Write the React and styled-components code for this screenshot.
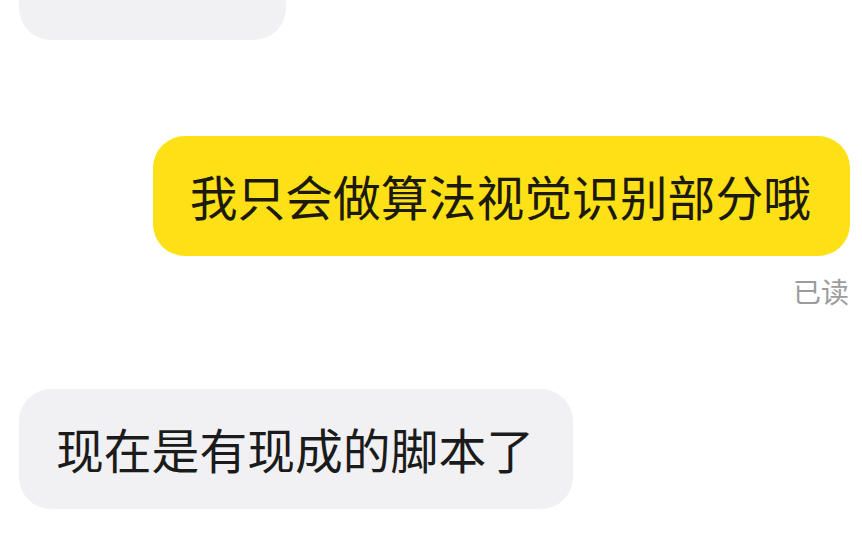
import React from 'react'
import styled, { createGlobalStyle } from 'styled-components'

const GlobalStyle = createGlobalStyle`
  html, body {
    margin: 0;
    padding: 0;
    background: #ffffff;
    overflow: hidden;
  }
`

const Chat = styled.div`
  width: 862px;
  height: 534px;
  box-sizing: border-box;
  padding: 0 12px 0 19px;
  display: flex;
  flex-direction: column;
  overflow: hidden;
  font-family: "Noto Sans CJK SC", "Noto Sans", sans-serif;
`

const Row = styled.div`
  display: flex;
  flex-direction: column;
  align-items: ${p => (p.$mine ? 'flex-end' : 'flex-start')};
  margin-top: ${p => p.$gap}px;
`

const Bubble = styled.div`
  box-sizing: border-box;
  height: 120px;
  display: flex;
  align-items: center;
  padding: 0 39px ${p => p.$lift || 0}px 37px;
  border-radius: 32px;
  font-size: 47.8px;
  line-height: 1;
  white-space: nowrap;
  color: ${p => (p.$mine ? '#1c1a0c' : '#1b1b1b')};
  background: ${p => (p.$mine ? '#fde016' : '#f1f1f3')};
`

const ReadMark = styled.div`
  margin-top: 16px;
  margin-right: 1px;
  font-size: 28px;
  line-height: 39px;
  color: #9c9c9c;
`

export default function App() {
  return (
    <>
      <GlobalStyle />
      <Chat>
        <Row $gap={-80}>
          <Bubble $lift={14}>这个可以</Bubble>
        </Row>
        <Row $mine $gap={96}>
          <Bubble $mine>我只会做算法视觉识别部分哦</Bubble>
          <ReadMark>已读</ReadMark>
        </Row>
        <Row $gap={78}>
          <Bubble>现在是有现成的脚本了</Bubble>
        </Row>
      </Chat>
    </>
  )
}
